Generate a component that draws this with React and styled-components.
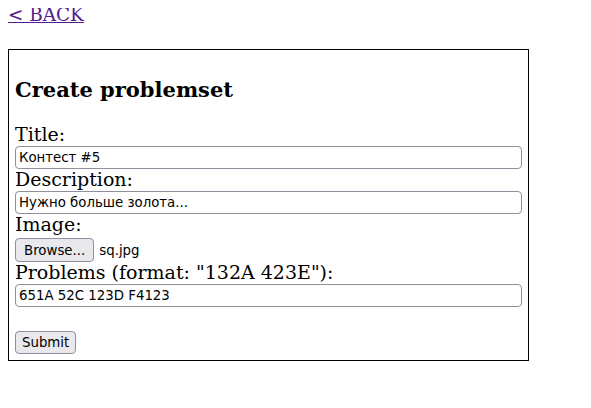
import React from 'react'
import styled, { createGlobalStyle } from 'styled-components'

const GlobalStyle = createGlobalStyle`
    body{
        margin:8px;
        font-family:"DejaVu Serif", serif;
        font-size:16px;
        color:#000;
        background:#fff;
    }
`

const BackBar = styled.div`
    height:14px;
    font-size:18.4px;
    line-height:14px;
    a{
        color:#551a8b;
        text-decoration:underline;
    }
`

const Card = styled.form`
    width:507px;
    margin-top:27px;
    padding:29px 6px 6px 6px;
    border:1px solid #000;
    display:flex;
    flex-direction:column;
    align-items:flex-start;
`

const Heading = styled.h3`
    margin:0 0 23px 0;
    font-size:21px;
    line-height:22px;
    font-weight:700;
`

const Label = styled.label`
    display:block;
    font-size:19px;
    line-height:21px;
    padding-bottom:1px;
`

const TextInput = styled.input`
    box-sizing:border-box;
    width:100%;
    height:23px;
    margin:0;
    padding:0 3px;
    border:1px solid #8f8f9d;
    border-radius:4px;
    font-family:"DejaVu Sans", sans-serif;
    font-size:13.33px;
    color:#000;
    background:#fff;
`

const FileRow = styled.div`
    display:flex;
    align-items:center;
    gap:5px;
    margin-top:2px;
    font-family:"DejaVu Sans", sans-serif;
    font-size:13.33px;
`

const Button = styled.button`
    box-sizing:border-box;
    height:${p => p.$tall ? '24px' : '23px'};
    margin:${p => p.$top || 0} 0 0 0;
    padding:0 ${p => p.$pad || '6px'};
    border:1px solid #8f8f9d;
    border-radius:4px;
    background:#e9e9ed;
    font-family:"DejaVu Sans", sans-serif;
    font-size:13.33px;
    color:#000;
`

const FileName = styled.span`
    color:#000;
`

const App = () => {
    return (
        <>
            <GlobalStyle />
            <BackBar>
                <a href="#back">&lt; BACK</a>
            </BackBar>
            <Card onSubmit={e => e.preventDefault()}>
                <Heading>Create problemset</Heading>
                <Label htmlFor="title">Title:</Label>
                <TextInput id="title" defaultValue="Контест #5" />
                <Label htmlFor="desc">Description:</Label>
                <TextInput id="desc" defaultValue="Нужно больше золота..." />
                <Label>Image:</Label>
                <FileRow>
                    <Button type="button" $tall $pad="8px">Browse...</Button>
                    <FileName>sq.jpg</FileName>
                </FileRow>
                <Label htmlFor="problems">Problems (format: "132A 423E"):</Label>
                <TextInput id="problems" defaultValue="651A 52C 123D F4123" />
                <Button type="submit" $top="24px">Submit</Button>
            </Card>
        </>
    )
}

export default App
